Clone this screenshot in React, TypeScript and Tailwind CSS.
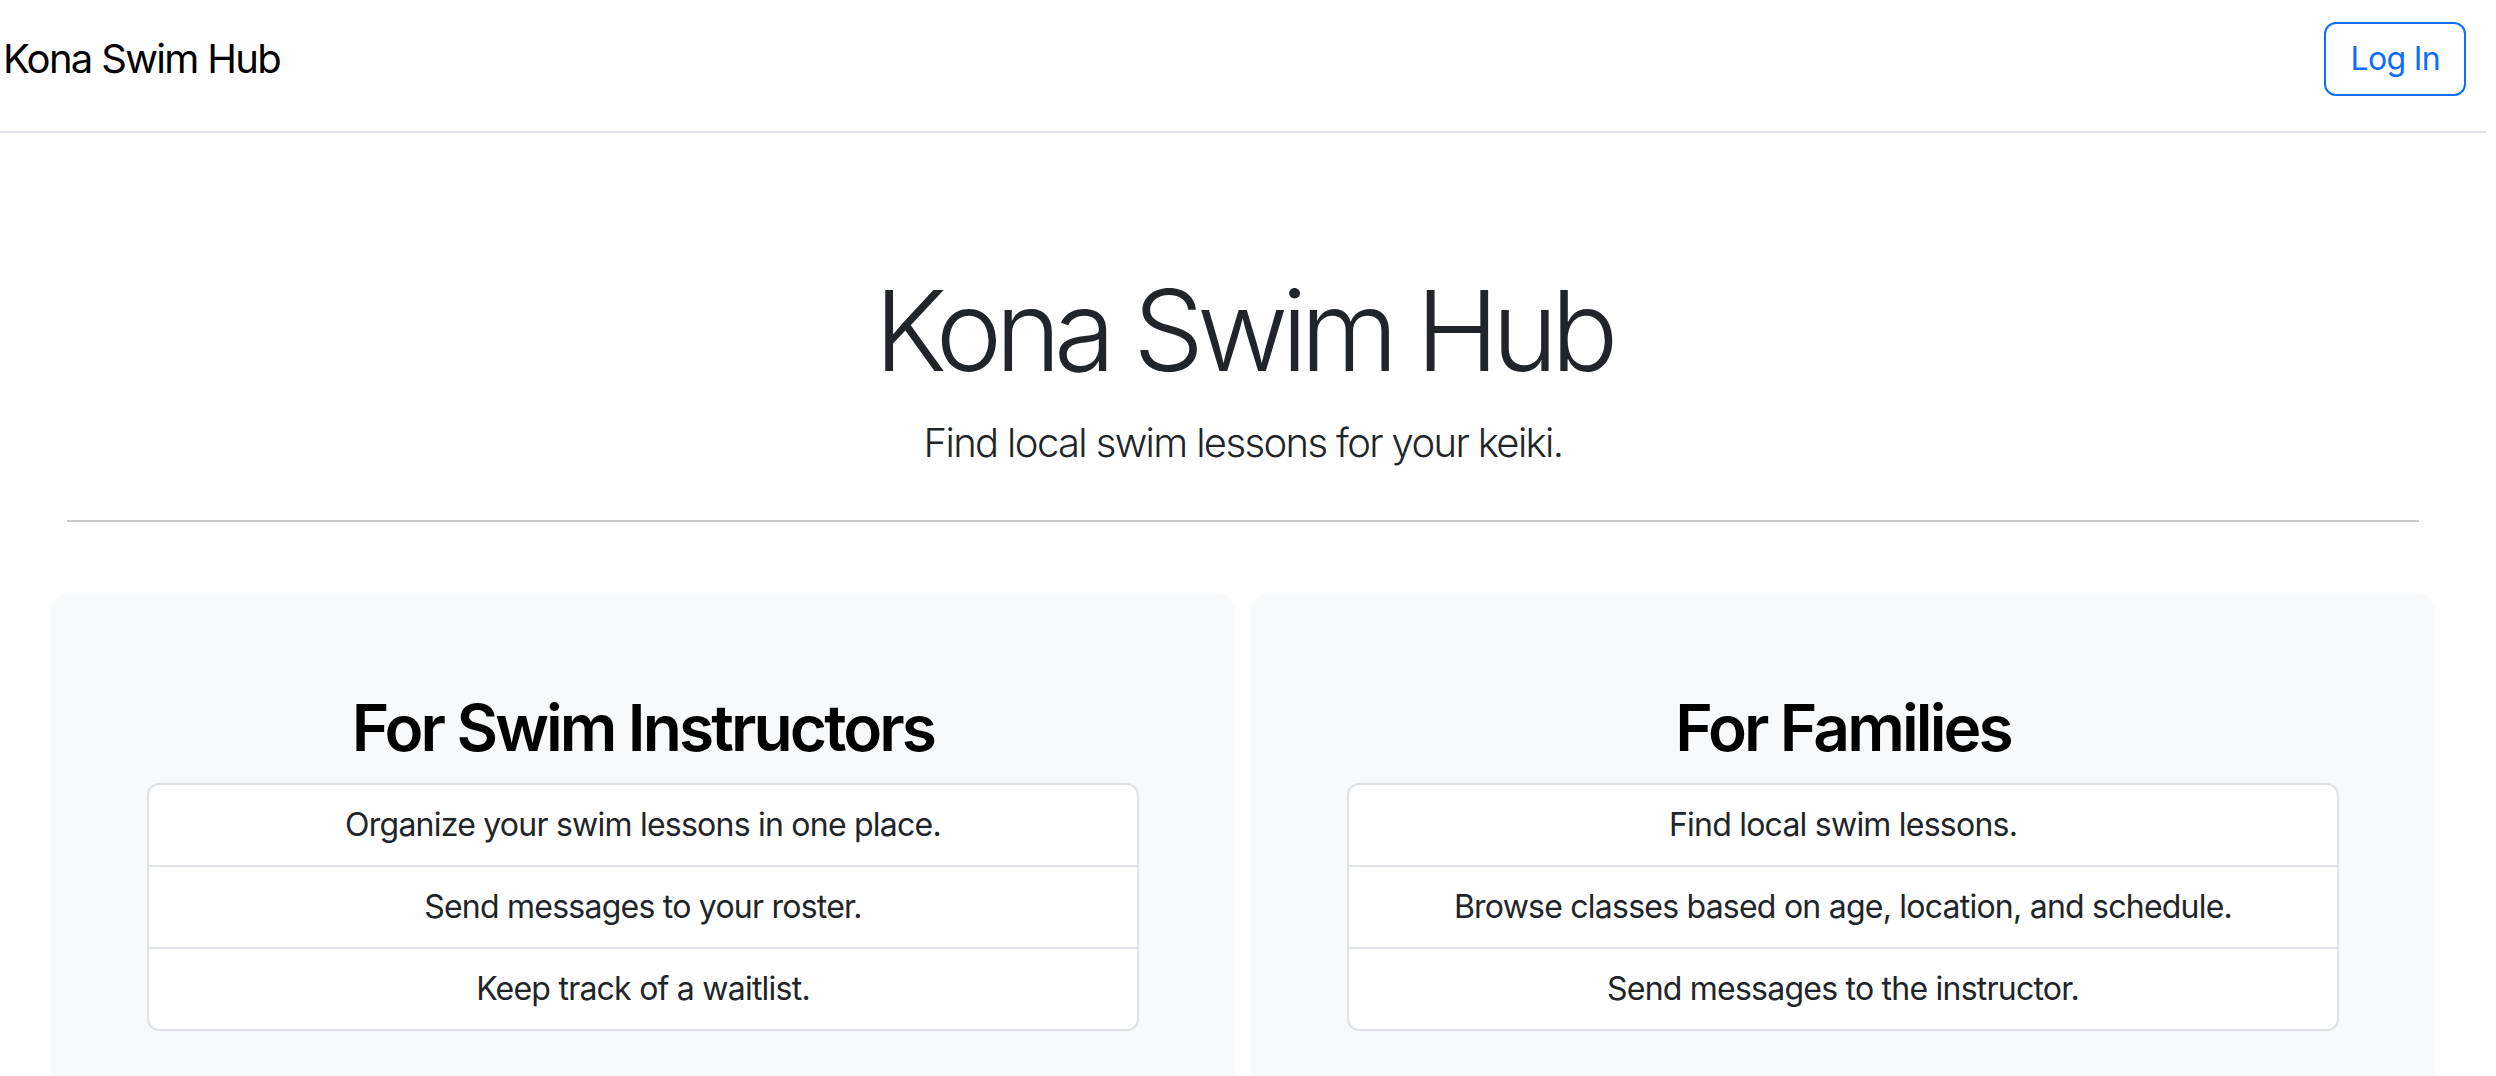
const instructorPoints = [
  'Organize your swim lessons in one place.',
  'Send messages to your roster.',
  'Keep track of a waitlist.',
];

const familyPoints = [
  'Find local swim lessons.',
  'Browse classes based on age, location, and schedule.',
  'Send messages to the instructor.',
];

function FeatureCard({ title, points }: { title: string; points: string[] }) {
  return (
    <div className="rounded-2xl bg-[#f8f9fa] px-[96px] pt-[96px] pb-[96px] text-center">
      <h2 className="mb-4 text-[64px] font-semibold leading-[1.2] tracking-[-0.045em] text-black">{title}</h2>
      <ul className="overflow-hidden rounded-xl border-2 border-[#dee2e6] bg-white">
        {points.map((p, i) => (
          <li
            key={p}
            className={`px-8 py-4 text-[32px] leading-[1.5] tracking-[-0.024em] text-[#212529] ${i > 0 ? 'border-t-2 border-[#dee2e6]' : ''}`}
          >
            {p}
          </li>
        ))}
      </ul>
    </div>
  );
}

export default function App() {
  return (
    <div className="min-h-screen w-[2486px] bg-white font-['Inter','Liberation_Sans',sans-serif] text-[#212529]">
      {/* ─── Navbar ─── */}
      <header className="h-[133px] border-b-2 border-[#dee2e6] pt-[22px]">
        <div className="flex h-[74px] items-center justify-between pl-[3px] pr-[20px]">
          <a className="text-[40px] leading-[1.5] tracking-[-0.042em] text-black">Kona Swim Hub</a>
          <button className="h-[74px] rounded-xl border-2 border-[#0d6efd] px-6 text-[32px] leading-[1.5] tracking-[-0.02em] text-[#0d6efd]">
            Log In
          </button>
        </div>
      </header>

      {/* ─── Hero ─── */}
      <section className="pt-[130px] text-center">
        <h1 className="text-[112px] font-light leading-[1.2] tracking-[-0.062em] text-[#212529]">Kona Swim Hub</h1>
        <p className="mt-4 text-[40px] font-light leading-[1.5] tracking-[-0.041em] text-[#212529]">
          Find local swim lessons for your keiki.
        </p>
      </section>

      <hr className="mx-[67px] mt-[47px] h-[2px] border-0 bg-[#c8c9ca]" />

      {/* ─── Cards ─── */}
      <section className="mt-[72px] grid grid-cols-2 gap-4 px-[51px]">
        <FeatureCard title="For Swim Instructors" points={instructorPoints} />
        <FeatureCard title="For Families" points={familyPoints} />
      </section>
    </div>
  );
}
